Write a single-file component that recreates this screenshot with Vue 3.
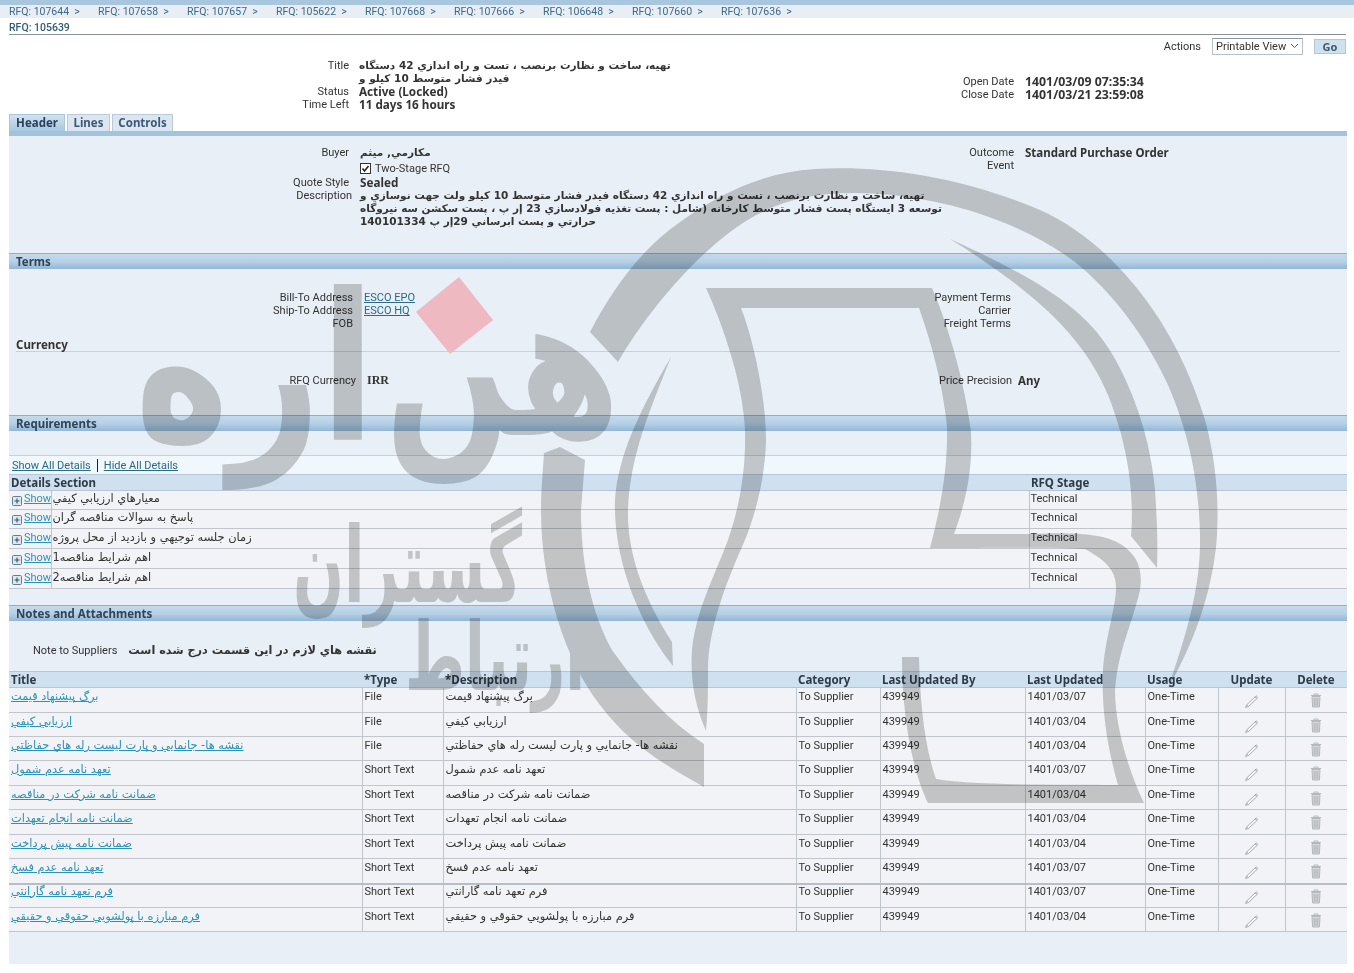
<template>
  <div class="page">
    <div class="topstrip"></div>
    <div class="crumbs">
      <span class="crumb" v-for="c in crumbs" :key="c">RFQ: {{ c }}&nbsp; &gt;</span>
    </div>
    <div class="pagetitle">RFQ: 105639</div>
    <div class="actions">
      <span class="actions-label">Actions</span>
      <span class="select">Printable View
        <svg width="9" height="6" viewBox="0 0 9 6"><path d="M1 1l3.5 3.5L8 1" fill="none" stroke="#555" stroke-width="1"/></svg>
      </span>
      <span class="go">Go</span>
    </div>

    <div class="summary">
      <div class="kv left">
        <label>Title</label>
        <div class="val">
          <div dir="rtl" class="ln">تهيه، ساخت و نظارت برنصب ، تست و راه اندازي 42 دستگاه</div>
          <div dir="rtl" class="ln">فيدر فشار متوسط 10 كيلو و</div>
        </div>
        <label>Status</label><div class="val">Active (Locked)</div>
        <label>Time Left</label><div class="val">11 days 16 hours</div>
      </div>
      <div class="kv right dates">
        <label>Open Date</label><div class="val">1401/03/09 07:35:34</div>
        <label>Close Date</label><div class="val">1401/03/21 23:59:08</div>
      </div>
    </div>

    <div class="tabs">
      <span class="tab active">Header</span>
      <span class="tab t-lines">Lines</span>
      <span class="tab t-controls">Controls</span>
    </div>
    <div class="tabline"></div>

    <div class="panel">
      <div class="summary first">
        <div class="kv left">
          <label>Buyer</label><div class="val buyer"><div dir="rtl" class="ln">مكارمي, ميثم</div></div>
          <label></label>
          <div class="check">
            <svg width="11" height="11" viewBox="0 0 11 11"><rect x=".5" y=".5" width="10" height="10" fill="#fff" stroke="#333"/><path d="M2.5 5.5l2 2.5 4-5" fill="none" stroke="#222" stroke-width="1.6"/></svg>
            Two-Stage RFQ
          </div>
          <label>Quote Style</label><div class="val">Sealed</div>
          <label class="desc-label">Description</label>
          <div class="val desc">
            <div dir="rtl" class="ln">تهيه، ساخت و نظارت برنصب ، تست و راه اندازي 42 دستگاه فيدر فشار متوسط 10 كيلو ولت جهت نوسازي و</div>
            <div dir="rtl" class="ln">توسعه 3 ايستگاه پست فشار متوسط كارخانه (شامل : پست تغذيه فولادسازي 23 إر پ ، پست سكشن سه نيروگاه</div>
            <div dir="rtl" class="ln">حرارتي و پست ابرساني 29إر پ 140101334</div>
          </div>
        </div>
        <div class="kv right">
          <label>Outcome</label><div class="val outcome">Standard Purchase Order</div>
          <label>Event</label><div class="val"></div>
        </div>
      </div>

      <div class="secbar terms">Terms</div>
      <div class="addr">
        <div class="kv addr-left">
          <label>Bill-To Address</label><a class="plain">ESCO EPO</a>
          <label>Ship-To Address</label><a class="plain">ESCO HQ</a>
          <label>FOB</label><span></span>
        </div>
        <div class="addr-right">
          <div>Payment Terms</div>
          <div>Carrier</div>
          <div>Freight Terms</div>
        </div>
      </div>
      <div class="subhead">Currency</div>
      <div class="cur">
        <span class="cur-a">RFQ Currency</span><b class="cur-b">IRR</b>
        <span class="cur-c">Price Precision</span><b class="cur-d">Any</b>
      </div>

      <div class="secbar req">Requirements</div>
      <div class="showbar">
        <a class="plain">Show All Details</a><i></i><a class="plain">Hide All Details</a>
      </div>
      <table class="grid details">
        <colgroup><col style="width:42px"><col style="width:978px"><col></colgroup>
        <thead>
          <tr><th colspan="2">Details Section</th><th>RFQ Stage</th></tr>
        </thead>
        <tbody>
          <tr v-for="d in details" :key="d">
            <td class="showcell">
              <svg width="10" height="10" viewBox="0 0 10 10"><rect x=".5" y=".5" width="9" height="9" rx="1" fill="#dfe8ef" stroke="#5f7f92"/><path d="M2.5 5h5M5 2.5v5" stroke="#2c4a5c"/></svg><a class="link">Show</a>
            </td>
            <td class="fa"><span dir="rtl">{{ d }}</span></td>
            <td>Technical</td>
          </tr>
        </tbody>
      </table>

      <div class="secbar notes">Notes and Attachments</div>
      <div class="note">
        <span class="note-label">Note to Suppliers</span>
        <b dir="rtl">نقشه هاي لازم در اين قسمت درج شده است</b>
      </div>
      <table class="grid attach">
        <colgroup>
          <col style="width:353px"><col style="width:81px"><col style="width:353px"><col style="width:84px">
          <col style="width:145px"><col style="width:120px"><col style="width:73px"><col style="width:67px"><col>
        </colgroup>
        <thead>
          <tr>
            <th>Title</th><th>*Type</th><th>*Description</th><th>Category</th><th>Last Updated By</th>
            <th>Last Updated</th><th>Usage</th><th class="c">Update</th><th class="c">Delete</th>
          </tr>
        </thead>
        <tbody>
          <tr v-for="r in rows" :key="r.title">
            <td><a class="link" dir="rtl">{{ r.title }}</a></td>
            <td>{{ r.type }}</td>
            <td><span dir="rtl">{{ r.title }}</span></td>
            <td>To Supplier</td>
            <td>439949</td>
            <td>{{ r.date }}</td>
            <td>One-Time</td>
            <td class="c icon pencil">
              <svg width="16" height="14" viewBox="0 0 16 14"><path d="M1.5 12.5l1-2.5L11 2l2 1.5-8.5 8zM2.5 10l2 1.5M11 2l1-1.2 1.6 1.4-.6 1.3" fill="#f4f5f6" stroke="#a4a8ac" stroke-width=".9"/></svg>
            </td>
            <td class="c icon">
              <svg width="12" height="15" viewBox="0 0 12 15"><path d="M1 2.5h10M4 2.5V1h4v1.5" fill="none" stroke="#b4b8bb"/><path d="M2 3.5h8l-.6 10.5H2.6z" fill="#d6d8da" stroke="#b4b8bb"/><path d="M4.2 5v8M6 5v8M7.8 5v8" stroke="#a8acaf" stroke-width=".8"/></svg>
            </td>
          </tr>
        </tbody>
      </table>
    </div>

    <!-- watermark logo sits over the whole page -->
    <svg class="watermark" width="1354" height="973" viewBox="0 0 1354 973">
      <g fill="#cdcdcd">
        <path d="M590 332C612 290 640 250 680 222C720 193 765 172 815 169C880 165 960 176 1040 210C1072 224 1105 250 1130 280C1165 320 1190 370 1205 420C1216 460 1219 500 1217 535C1214 585 1196 640 1168 688C1188 630 1201 585 1200 535C1199 490 1192 440 1168 385C1145 335 1112 292 1075 262C1030 228 960 200 880 194C820 190 775 198 730 232C690 262 645 315 618 362Z"/>
        <path d="M950 239C1000 262 1060 290 1095 330C1125 365 1150 430 1155 490C1157 520 1158 545 1157 568L1131 536C1134 500 1130 450 1108 395C1085 340 1040 295 950 239Z"/>
        <path d="M706 288H932C950 330 965 385 971 432C973 470 965 505 954 534H1030C1070 532 1105 533 1122 545C1138 556 1143 570 1140 590C1132 625 1118 650 1115 690C1115 725 1128 770 1144 803H928C912 770 902 715 902 657H919C920 700 924 745 936 779C980 786 1060 784 1118 785C1108 750 1101 710 1103 670C1105 640 1115 610 1116 590C1117 570 1105 560 1085 549C1060 547 1000 548 930 548C940 510 948 470 947 427C943 385 932 345 919 308H741C752 335 766 395 766 440C765 480 755 515 745 540C725 585 708 630 708 670C708 690 708 710 706 731C695 705 690 680 692 650C696 610 715 575 728 540C740 505 746 470 745 430C743 385 725 330 706 288Z"/>
        <path d="M671 357C640 410 618 455 615 500C613 560 640 625 673 666L672 642C645 600 627 555 628 510C630 455 650 410 671 357Z"/>
        <path d="M560 447L585 460L581 510C581 560 590 610 612 650C640 690 670 722 704 744V787C665 765 630 745 600 705C565 660 541 585 541 510C541 490 543 470 544 453Z"/>
        <text class="wm" x="135" y="440" font-size="205" textLength="240" lengthAdjust="spacingAndGlyphs">اره</text>
        <text class="wm" x="385" y="435" font-size="200" textLength="235" lengthAdjust="spacingAndGlyphs">هں</text>
        <text class="wm" x="293" y="602" font-size="105" textLength="229" lengthAdjust="spacingAndGlyphs">گستران</text>
        <text class="wm" x="405" y="690" font-size="95" textLength="180" lengthAdjust="spacingAndGlyphs">ارتباط</text>
      </g>
    </svg>
    <svg class="diamond" width="78" height="78" viewBox="0 0 78 78"><polygon points="43,0 77,43 34,77 0,35" fill="#efb9c1"/></svg>
  </div>
</template>

<script setup>
const crumbs = ['107644', '107658', '107657', '105622', '107668', '107666', '106648', '107660', '107636']

const details = [
  'معيارهاي ارزيابي كيفي',
  'پاسخ به سوالات مناقصه گران',
  'زمان جلسه توجيهي و بازديد از محل پروژه',
  'اهم شرايط مناقصه1',
  'اهم شرايط مناقصه2',
]

const rows = [
  { title: 'برگ پيشنهاد قيمت', type: 'File', date: '1401/03/07' },
  { title: 'ارزيابي كيفي', type: 'File', date: '1401/03/04' },
  { title: 'نقشه ها- جانمايي و پارت ليست رله هاي حفاظتي', type: 'File', date: '1401/03/04' },
  { title: 'تعهد نامه عدم شمول', type: 'Short Text', date: '1401/03/07' },
  { title: 'ضمانت نامه شركت در مناقصه', type: 'Short Text', date: '1401/03/04' },
  { title: 'ضمانت نامه انجام تعهدات', type: 'Short Text', date: '1401/03/04' },
  { title: 'ضمانت نامه پيش پرداخت', type: 'Short Text', date: '1401/03/04' },
  { title: 'تعهد نامه عدم فسخ', type: 'Short Text', date: '1401/03/07' },
  { title: 'فرم تعهد نامه گارانتي', type: 'Short Text', date: '1401/03/07' },
  { title: 'فرم مبارزه با پولشويي حقوقي و حقيقي', type: 'Short Text', date: '1401/03/04' },
]
</script>

<style scoped>
.page {
  position: relative;
  width: 1354px;
  height: 973px;
  overflow: hidden;
  background: #fff;
  font-family: Roboto, "DejaVu Sans", sans-serif;
  font-size: 11px;
  line-height: 13px;
  color: #333;
}
.topstrip { height: 5px; background: #a9c6df; }
.crumbs { display: flex; height: 13px; padding-left: 9px; background: #e9eef5; color: #3b6a88; font-size: 10.5px; line-height: 13px; }
.crumb { width: 89px; white-space: nowrap; }
.pagetitle { margin: 3px 8px 0 9px; height: 13px; border-bottom: 1px solid #8a9299; color: #2f5a78; font-weight: 500; font-size: 10.5px; line-height: 14px; }
.actions { display: flex; justify-content: flex-end; align-items: center; box-sizing: border-box; height: 24px; padding: 0 8px 2px 0; }
.actions-label { margin-right: 11px; }
.select { display: flex; align-items: center; justify-content: space-between; width: 83px; height: 15px; padding: 0 3px; margin-right: 11px; border: 1px solid #b9c2c9; border-top-color: #8f989f; background: #fff; }
.go { width: 32px; height: 15px; text-align: center; background: #cfe0ee; border: 1px solid #b5c7d6; box-sizing: border-box; font-family: "Noto Sans", sans-serif; font-weight: 700; color: #3d5a70; line-height: 14px; }

.summary { display: flex; }
.kv { display: grid; row-gap: 0; column-gap: 10px; }
.kv label { text-align: right; white-space: nowrap; }
.kv .val { font-family: "Noto Sans", sans-serif; font-weight: 700; font-size: 11.7px; white-space: nowrap; min-height: 13px; }
.left { width: 649px; grid-template-columns: 349px 1fr; align-content: start; }
.right { width: 360px; grid-template-columns: 365px 1fr; align-content: start; column-gap: 11px; }
.dates { margin-top: 16px; }
.dates .val { font-size: 12.3px; }
.kv .outcome { font-size: 11.5px; }
.ln { width: max-content; font-family: "DejaVu Sans", sans-serif; font-size: 10.5px; }

.tabs { display: flex; gap: 2px; height: 17px; margin: 3px 0 0 9px; font-family: "Noto Sans", sans-serif; font-size: 11.5px; }
.tab { box-sizing: border-box; height: 17px; text-align: center; line-height: 15px; font-weight: 700; color: #3c5a78; background: #dbe6f0; border: 1px solid #b9cad9; border-bottom: 0; }
.tab.active { width: 56px; background: linear-gradient(#d2e2f0, #a9c7e0); border-color: #a9c6df; color: #26425e; }
.t-lines { width: 43px; }
.t-controls { width: 61px; }
.tabline { height: 5px; margin: 0 7px 0 9px; background: #a3c3dd; }

.panel { width: 1338px; height: 828px; margin-left: 9px; background: #e9eff6; }
.first { padding-top: 10px; margin-left: -9px; }
.first .check { display: flex; align-items: center; gap: 4px; height: 16px; margin-left: 1px; }
.first .left .val { margin-left: 1px; }
.first .buyer { min-height: 14px; }
.first .desc { margin-left: 4px; }
.desc-label { margin-right: -3px; }

.secbar { box-sizing: border-box; height: 16px; padding-left: 7px; border-top: 1px solid #8fb0cd; background: linear-gradient(#c4daed, #b6d0e6 50%, #93b7d7); font-family: "Noto Sans", sans-serif; font-size: 11.5px; font-weight: 700; line-height: 15px; color: #2f4458; }
.terms { margin-top: 25px; }

.addr { display: flex; padding-top: 22px; height: 39px; }
.addr-left { width: 1002px; grid-template-columns: 344px 1fr; column-gap: 11px; }
.addr-right { width: 0; white-space: nowrap; direction: rtl; text-align: right; }
.plain { color: #2a6a82; text-decoration: underline; white-space: nowrap; }

.subhead { margin: 8px 7px 0 7px; height: 13px; border-bottom: 1px solid #c3d3e4; font-family: "Noto Sans", sans-serif; font-size: 11.5px; font-weight: 700; line-height: 13px; }
.cur { display: flex; margin-top: 22px; height: 13px; }
.cur-a { width: 347px; text-align: right; }
.cur-b { margin-left: 11px; width: 572px; font-family: "Liberation Serif", serif; font-size: 12px; }
.cur-c { width: 79px; }
.cur-d { font-family: "Noto Sans", sans-serif; font-size: 11.5px; }

.req { margin-top: 28px; }
.showbar { display: flex; align-items: center; box-sizing: border-box; height: 19px; margin-top: 24px; padding-left: 3px; background: #f0f7fd; border-top: 1px solid #c3d2df; }
.showbar i { width: 1px; height: 13px; margin: 0 6px; background: #222; }

.grid { width: 1338px; border-collapse: collapse; table-layout: fixed; background: #f2f3f6; }
.grid th { height: 15px; padding: 0 2px; text-align: left; font-family: "Noto Sans", sans-serif; font-size: 11.5px; font-weight: 700; color: #2e3a46; background: #cfe0f0; border: 1px solid #b8c6d4; border-left: 0; border-right: 0; }
.grid td { padding: 1px 1px 0; vertical-align: top; border: 1px solid #c2c6cc; white-space: nowrap; overflow: hidden; }
.grid tr > :first-child { border-left: 0; }
.grid tr > :last-child { border-right: 0; }
.details td { height: 17px; padding-top: 2px; }
.details tbody tr:nth-child(1) td, .details tbody tr:nth-child(2) td { padding-top: 1px; }
.details td:nth-child(1) { border-right: 0; padding-left: 3px; }
.details td:nth-child(2) { border-left: 1px solid #c2c6cc; }
.showcell svg { vertical-align: -4px; margin-right: 2px; }
.fa { font-family: "DejaVu Sans", sans-serif; font-size: 11.4px; }
.link { color: #2a93b8; text-decoration: underline; }
.notes { margin-top: 16px; }
.note { display: flex; gap: 11px; margin-top: 23px; height: 13px; padding-left: 24px; }
.note b { font-family: "DejaVu Sans", sans-serif; font-size: 11.3px; }
.attach { margin-top: 14px; }
.attach td { padding: 2px 1px 0 2px; }
.attach td:nth-child(1), .attach td:nth-child(3) { font-family: "DejaVu Sans", sans-serif; font-size: 11.4px; }
.attach tbody tr { height: 24px; }
.attach tbody tr:nth-child(1), .attach tbody tr:nth-child(4), .attach tbody tr:nth-child(6), .attach tbody tr:nth-child(8) { height: 25px; }
.attach tbody tr:nth-child(8) td { border-bottom: 2px solid #b9bdc4; }
.attach tbody tr:nth-child(9) td { padding-top: 0; }
.attach .c { text-align: center; }
.attach .icon { padding: 5px 0 0; }
.attach .pencil { padding-top: 7px; }
.attach tbody tr:nth-child(9) td.icon { padding-top: 4px; }
.attach tbody tr:nth-child(9) td.pencil { padding-top: 6px; }
.attach .icon svg { display: block; margin: 0 auto; }

.watermark { position: absolute; left: 0; top: 0; mix-blend-mode: multiply; pointer-events: none; }
.wm { font-family: "DejaVu Sans", sans-serif; font-weight: 700; }
.diamond { position: absolute; left: 416px; top: 277px; pointer-events: none; }
</style>
